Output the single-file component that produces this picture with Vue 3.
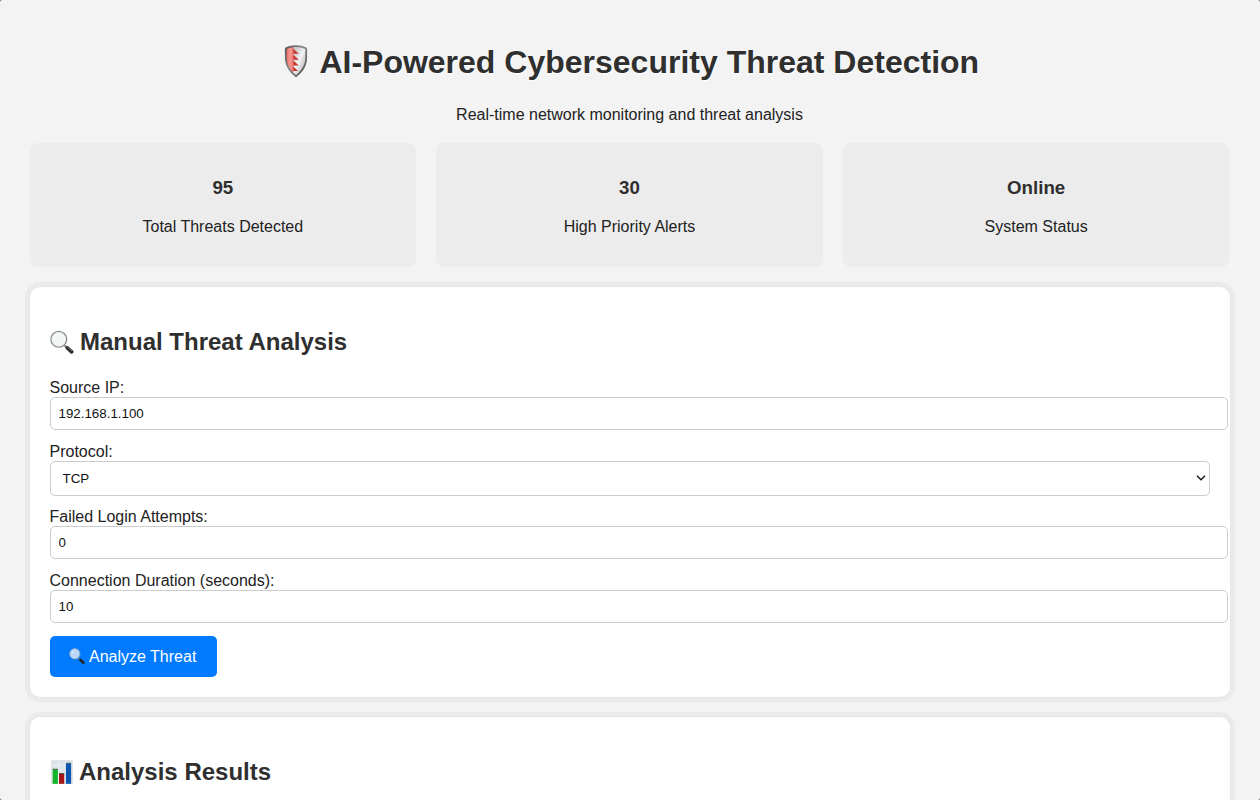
<script setup>
import { ref } from 'vue'

const stats = [
  { value: '95', label: 'Total Threats Detected' },
  { value: '30', label: 'High Priority Alerts' },
  { value: 'Online', label: 'System Status' },
]
const sourceIp = ref('192.168.1.100')
const protocol = ref('TCP')
const failedLogins = ref('0')
const duration = ref('10')
</script>

<template>
  <div class="page">
    <div class="container">
      <header class="header">
        <h1>
          <svg class="shield" viewBox="0 0 32 40">
            <defs>
              <linearGradient id="steel" x1="0" y1="0" x2="1" y2="1">
                <stop offset="0" stop-color="#4d4d4d" />
                <stop offset=".45" stop-color="#8a8a8a" />
                <stop offset="1" stop-color="#4a4040" />
              </linearGradient>
              <linearGradient id="silver" x1="0" y1="0" x2="1" y2="1">
                <stop offset="0" stop-color="#bcbcbe" />
                <stop offset=".5" stop-color="#f1f1f3" />
                <stop offset="1" stop-color="#a4a4a6" />
              </linearGradient>
              <linearGradient id="crimson" x1="0" y1="0" x2="1" y2="0">
                <stop offset="0" stop-color="#ee6a62" />
                <stop offset=".5" stop-color="#f59a93" />
                <stop offset="1" stop-color="#ea7068" />
              </linearGradient>
            </defs>
            <path fill="url(#steel)" d="M16 3.200c3.800 0 7.400.8 10.200 2.400.6.4.9.9.9 1.600v8.400c0 8.200-4.300 15-11.100 19.600C9.200 30.600 4.900 23.800 4.900 15.600V7.200c0-.7.3-1.200.9-1.600C8.600 4 12.200 3.200 16 3.200z" />
            <path fill="url(#silver)" d="M13 5.200c4.500-.5 8.700.2 12.300 1.900v8.500c0 7.200-3.700 13.100-9.300 17.300l-3-2.500z" />
            <path fill="url(#crimson)" d="M13.500 5.200C11 5.400 8.800 6 6.700 7v8.600c0 6 2.500 11.200 6.800 15.200z" />
            <path fill="#c9372d" d="M13.300 6.800l5.500 5h-5.500zM13.300 12.700l5.500 5h-5.500zM13.300 18.600l5.500 5h-5.500zM13.300 24.500l4.800 4.400h-4.800z" />
          </svg>
          AI-Powered Cybersecurity Threat Detection
        </h1>
        <p>Real-time network monitoring and threat analysis</p>
      </header>

      <section class="stats">
        <div v-for="s in stats" :key="s.label" class="stat">
          <h3>{{ s.value }}</h3>
          <p>{{ s.label }}</p>
        </div>
      </section>

      <section class="panel">
        <h2>
          <svg class="glyph" viewBox="0 0 24 24">
            <path stroke="#777" stroke-width="2" d="M14.600 15.600l3 2.800" />
            <path stroke="#252525" stroke-width="3.600" stroke-linecap="round" d="M17.400 17.900l4.300 3.900" />
            <path stroke="#a5a5a5" stroke-width=".8" d="M17.400 16.900l4.500 4.100" />
            <circle cx="8.800" cy="9.300" r="7.900" fill="#f5f6f6" stroke="#858b8a" stroke-width="1.300" />
            <circle cx="8.800" cy="9.300" r="6.900" fill="none" stroke="#dde2e1" stroke-width=".7" />
          </svg>
          Manual Threat Analysis
        </h2>
        <form @submit.prevent>
          <div class="field">
            <label for="ip">Source IP:</label>
            <input id="ip" v-model="sourceIp" type="text" />
          </div>
          <div class="field protocol">
            <label for="proto">Protocol:</label>
            <div class="select">
              <select id="proto" v-model="protocol">
                <option>TCP</option>
              </select>
              <svg class="chevron" viewBox="0 0 10 6">
                <path fill="none" stroke="#111" stroke-width="1.300" d="M1 .8l4 4 4-4" />
              </svg>
            </div>
          </div>
          <div class="field">
            <label for="logins">Failed Login Attempts:</label>
            <input id="logins" v-model="failedLogins" type="number" />
          </div>
          <div class="field">
            <label for="duration">Connection Duration (seconds):</label>
            <input id="duration" v-model="duration" type="number" />
          </div>
          <button type="submit">
            <svg class="small-glyph" viewBox="0 0 16 16">
              <path stroke="#6e7884" stroke-width="1.500" d="M9.500 10l2 1.900" />
              <path stroke="#242424" stroke-width="2.600" stroke-linecap="round" d="M11.400 11.900l3 2.800" />
              <circle cx="5.800" cy="5.800" r="5.200" fill="#b9d8f8" stroke="#7a9dbf" stroke-width=".9" />
              <path fill="none" stroke="#e2f0ff" stroke-width="1" d="M2.900 5.600a3.200 3.200 0 0 1 3-2.700" />
            </svg>
            <span>Analyze Threat</span>
          </button>
        </form>
      </section>

      <section class="panel results">
        <h2>
          <svg class="glyph" viewBox="0 0 24 24">
            <path fill="#dce5ea" stroke="#c9d0d3" stroke-width=".7" d="M1.800.8h20.400v23H1.800z" />
            <path stroke="#edf3f6" stroke-width=".8" d="M2 5.500h20M2 11h20M2 16.500h20M8.500 1v22M15.300 1v22" />
            <path fill="#12b52a" d="M2.700 9.300h5.200v14.500H2.700z" />
            <path fill="#a51416" d="M9 13.500h5.200v10.300H9z" />
            <path fill="#0b56ae" d="M15.900 3.200h5.200v20.600h-5.200z" />
            <path fill="#4b6051" d="M2.700 8.800h5.200v.9H2.700zM9 13h5.200v.9H9zM15.900 2.700h5.200v.9h-5.200z" />
          </svg>
          Analysis Results
        </h2>
      </section>
    </div>
  </div>
</template>

<style>
html {
  background: #555;
}
body {
  margin: 0;
  overflow: hidden;
}
</style>

<style scoped>
.page {
  height: 800px;
  box-sizing: border-box;
  overflow: hidden;
  padding: 41.500px 0 0 29.500px;
  border-radius: 2px;
  background: #f3f3f3;
  color: #222;
  font: 16px/18px "Liberation Sans", Arial, sans-serif;
}
.container {
  width: 1200px;
}
.header {
  text-align: center;
}
h1,
h2,
h3 {
  color: #2f2f2f;
}
h1 {
  display: flex;
  justify-content: center;
  gap: 7.500px;
  margin: 0 0 24.500px;
  font-size: 32px;
  line-height: 40px;
  text-shadow: 1px 1px 1px #fff;
}
.shield {
  width: 32px;
  height: 40px;
}
p {
  margin: 0;
}
.stats {
  display: grid;
  grid-template-columns: repeat(3, 1fr);
  gap: 20px;
  margin: 19px 0 20px;
}
.stat {
  box-sizing: border-box;
  height: 123.500px;
  padding: 33.500px 15px 0;
  border-radius: 8px;
  background: #ececec;
  text-align: center;
}
.stat h3 {
  margin: 0 0 20px;
  font-size: 18.720px;
  line-height: 21px;
}
.panel {
  box-sizing: border-box;
  height: 410px;
  margin-bottom: 20px;
  padding: 39px 20px 20px;
  border-radius: 10px;
  background: #fff;
  box-shadow: 0 0 0 1px #e6e6e6, 0 0 0 5px #ebebeb;
}
h2 {
  display: flex;
  align-items: center;
  gap: 6.500px;
  margin: 0 0 21px;
  font-size: 24px;
  line-height: 32px;
}
.results h2 {
  gap: 5.500px;
}
.glyph {
  width: 24px;
  height: 24px;
  fill: none;
}
.field {
  margin-bottom: 13px;
}
.field.protocol {
  margin-bottom: 12.400px;
}
label {
  display: block;
}
input,
select {
  display: block;
  width: 100%;
  margin: 0;
  padding: 8px;
  border: 1px solid #ccc;
  border-radius: 5px;
  background: #fff;
  color: #111;
  font: 13.333px "Liberation Sans", Arial, sans-serif;
}
input {
  box-sizing: content-box;
  height: 15px;
}
.select {
  position: relative;
}
select {
  box-sizing: border-box;
  height: 35px;
  padding-left: 12px;
  appearance: none;
}
.chevron {
  position: absolute;
  top: 14.500px;
  right: 4px;
  width: 10px;
  height: 6px;
  pointer-events: none;
}
button {
  display: flex;
  align-items: center;
  box-sizing: border-box;
  width: 167px;
  height: 41px;
  gap: 4px;
  padding: 1px 0 0 19.500px;
  border: 0;
  border-radius: 5px;
  background: #007bff;
  color: #fff;
  font: 16px/18px "Liberation Sans", Arial, sans-serif;
  white-space: nowrap;
}
.small-glyph {
  flex: none;
  width: 16px;
  height: 16px;
  margin-top: -2px;
  fill: none;
}
</style>
